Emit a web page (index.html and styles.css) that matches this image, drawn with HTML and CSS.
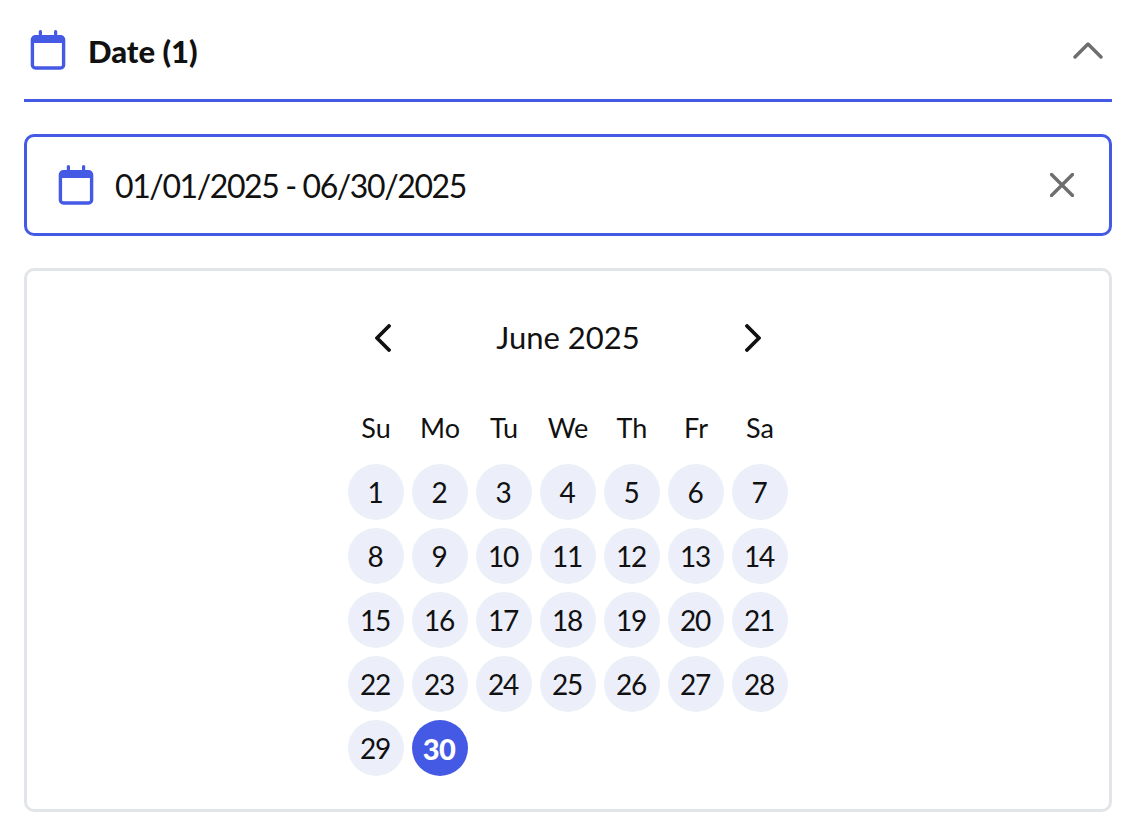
FILE: index.html
```html
<!DOCTYPE html>
<html lang="en">
<head>
    <meta charset="UTF-8">
    <meta name="viewport" content="width=device-width, initial-scale=1.0">
    <title>Date filter</title>
    <link rel="stylesheet" href="styles.css">
</head>
<body>
    <div class="filter">
        <div class="filter-header">
            <svg class="cal-icon" viewBox="0 0 36 40">
                <rect x="8.8" y="0" width="3.2" height="8" rx="1.5" fill="#4459e4"/>
                <rect x="24" y="0" width="3.2" height="8" rx="1.5" fill="#4459e4"/>
                <rect x="2.4" y="6.7" width="31.2" height="31.3" rx="3" fill="none" stroke="#4459e4" stroke-width="3.4"/>
                <path d="M2.4 12.5h31.2V8a1.5 1.5 0 0 0-1.5-1.5H3.9A1.5 1.5 0 0 0 2.4 8z" fill="#4459e4" stroke="#4459e4"/>
            </svg>
            <h2 class="filter-title">Date (1)</h2>
            <svg class="chevron-up" viewBox="0 0 30 18">
                <path d="M2 16L15 3l13 13" fill="none" stroke="#6e6e6e" stroke-width="3.4" stroke-linecap="round" stroke-linejoin="round"/>
            </svg>
        </div>

        <!-- Selected range -->
        <div class="range-input">
            <svg class="cal-icon" viewBox="0 0 36 40">
                <rect x="8.8" y="0" width="3.2" height="8" rx="1.5" fill="#4459e4"/>
                <rect x="24" y="0" width="3.2" height="8" rx="1.5" fill="#4459e4"/>
                <rect x="2.4" y="6.7" width="31.2" height="31.3" rx="3" fill="none" stroke="#4459e4" stroke-width="3.4"/>
                <path d="M2.4 12.5h31.2V8a1.5 1.5 0 0 0-1.5-1.5H3.9A1.5 1.5 0 0 0 2.4 8z" fill="#4459e4" stroke="#4459e4"/>
            </svg>
            <span class="range-text">01/01/2025 - 06/30/2025</span>
            <svg class="clear-icon" viewBox="0 0 24 24">
                <path d="M1.5 1.5l21 21M22.5 1.5l-21 21" fill="none" stroke="#6e6e6e" stroke-width="3.4" stroke-linecap="round"/>
            </svg>
        </div>

        <!-- Calendar -->
        <div class="calendar">
            <div class="month">
                <div class="month-nav">
                    <svg class="nav-icon" viewBox="0 0 16 28">
                        <path d="M14 2L2 14l12 12" fill="none" stroke="#111" stroke-width="3.8" stroke-linecap="round" stroke-linejoin="round"/>
                    </svg>
                    <span class="month-name">June 2025</span>
                    <svg class="nav-icon" viewBox="0 0 16 28">
                        <path d="M2 2l12 12L2 26" fill="none" stroke="#111" stroke-width="3.8" stroke-linecap="round" stroke-linejoin="round"/>
                    </svg>
                </div>
                <div class="weekdays">
                    <span>Su</span><span>Mo</span><span>Tu</span><span>We</span><span>Th</span><span>Fr</span><span>Sa</span>
                </div>
                <div class="days">
                    <div class="day">1</div><div class="day">2</div><div class="day">3</div><div class="day">4</div><div class="day">5</div><div class="day">6</div><div class="day">7</div>
                    <div class="day">8</div><div class="day">9</div><div class="day">10</div><div class="day">11</div><div class="day">12</div><div class="day">13</div><div class="day">14</div>
                    <div class="day">15</div><div class="day">16</div><div class="day">17</div><div class="day">18</div><div class="day">19</div><div class="day">20</div><div class="day">21</div>
                    <div class="day">22</div><div class="day">23</div><div class="day">24</div><div class="day">25</div><div class="day">26</div><div class="day">27</div><div class="day">28</div>
                    <div class="day">29</div><div class="day selected">30</div>
                </div>
            </div>
        </div>
    </div>
</body>
</html>
```

FILE: styles.css
```css
body {
    font-family: 'Lato', 'Liberation Sans', sans-serif;
    background: #fff;
    color: #111;
    margin: 0;
}
.filter {
    padding: 0 28px 22px 24px;
}
.filter-header {
    display: flex;
    align-items: center;
    height: 99px;
    padding: 0 9px 0 6px;
    border-bottom: 3px solid #4459e4;
}
.filter-title {
    margin: 2px 0 0 22px;
    font-size: 31px;
    font-weight: 900;
    flex: 1;
}
.cal-icon {
    width: 36px;
    height: 40px;
    flex: none;
}
.chevron-up {
    width: 30px;
    height: 18px;
}
.range-input {
    display: flex;
    align-items: center;
    box-sizing: border-box;
    height: 102px;
    margin-top: 32px;
    padding: 0 35px 0 31px;
    border: 3px solid #4459e4;
    border-radius: 10px;
}
.range-text {
    flex: 1;
    margin-left: 21px;
    font-size: 32px;
    letter-spacing: -1.4px;
}
.clear-icon {
    width: 24px;
    height: 24px;
}
.calendar {
    box-sizing: border-box;
    height: 544px;
    margin-top: 32px;
    padding-top: 50px;
    border: 3px solid #e2e5ea;
    border-radius: 10px;
}
.month {
    width: 440px;
    margin: 0 auto;
}
.month-nav {
    display: flex;
    align-items: center;
    justify-content: space-between;
    height: 34px;
    padding: 0 27px;
}
.month-name {
    margin-bottom: 3px;
    font-size: 31px;
}
.nav-icon {
    width: 16px;
    height: 28px;
}
.weekdays {
    display: grid;
    grid-template-columns: repeat(7, 56px);
    column-gap: 8px;
    height: 32px;
    margin-top: 57px;
    margin-bottom: 20px;
    font-size: 27px;
    line-height: 32px;
    text-align: center;
}
.days {
    display: grid;
    grid-template-columns: repeat(7, 56px);
    grid-auto-rows: 56px;
    gap: 8px;
}
.day {
    display: flex;
    align-items: center;
    justify-content: center;
    padding-right: 2px;
    border-radius: 50%;
    background: #eceefa;
    font-size: 28px;
    letter-spacing: -1.2px;
}
.day.selected {
    background: #4459e4;
    color: #fff;
    font-size: 29px;
    font-weight: 900;
    letter-spacing: -0.6px;
}
```
